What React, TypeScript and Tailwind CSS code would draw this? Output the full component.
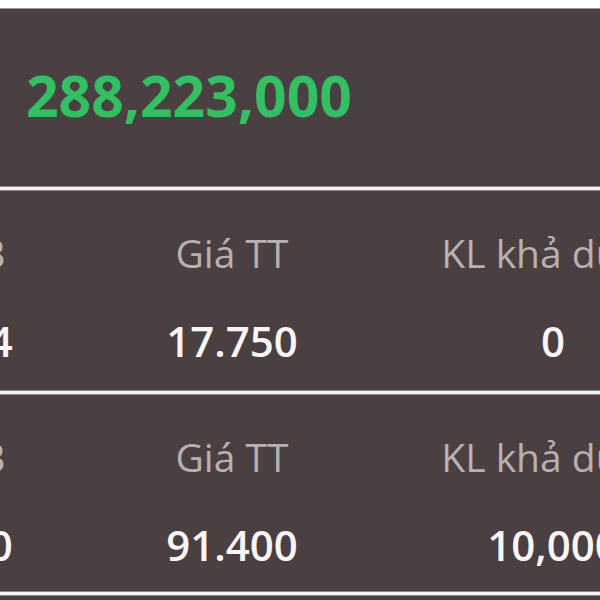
const rows = [
  { avg: '18.234', price: '17.750', qty: '0' },
  { avg: '92.150', price: '91.400', qty: '10,000' },
];

function Separator() {
  return (
    <div className="flex flex-col">
      <div className="h-px bg-[#8f8788]" />
      <div className="h-[3px] bg-[#f4f1f1]" />
      <div className="h-px bg-[#8f8788]" />
    </div>
  );
}

function StockRow({ avg, price, qty, height }: { avg: string; price: string; qty: string; height: string }) {
  const cols = [
    { label: 'Giá TB', value: avg, width: 'w-[200px]' },
    { label: 'Giá TT', value: price, width: 'w-[370px]' },
    { label: 'KL khả dụng', value: qty, width: 'w-[272px]' },
  ];
  return (
    <div className={`${height} overflow-hidden`}>
      <div className="flex -ml-[153px] pt-[42px]">
        {cols.map((c) => (
          <div key={c.label} className={`${c.width} shrink-0 flex flex-col items-center`}>
            <span className="text-[39px] leading-none text-[#b8b0b1] whitespace-nowrap">{c.label}</span>
            <span className="mt-[48px] text-[42px] leading-none font-semibold text-[#f7f5f5] whitespace-nowrap">
              {c.value}
            </span>
          </div>
        ))}
      </div>
    </div>
  );
}

export default function App() {
  return (
    <div className="w-[600px] h-[600px] overflow-hidden bg-[#4a3f41] font-['Open_Sans',sans-serif]">
      <div className="h-[8px] bg-white" />
      <div className="h-px bg-[#9a9394]" />
      <div className="h-[177px] flex items-center pl-[26px] pb-[4px]">
        <span className="text-[57px] leading-none font-bold text-[#33c062]">288,223,000</span>
      </div>
      <Separator />
      <StockRow {...rows[0]} height="h-[199px]" />
      <Separator />
      <StockRow {...rows[1]} height="h-[196px]" />
      <Separator />
    </div>
  );
}
